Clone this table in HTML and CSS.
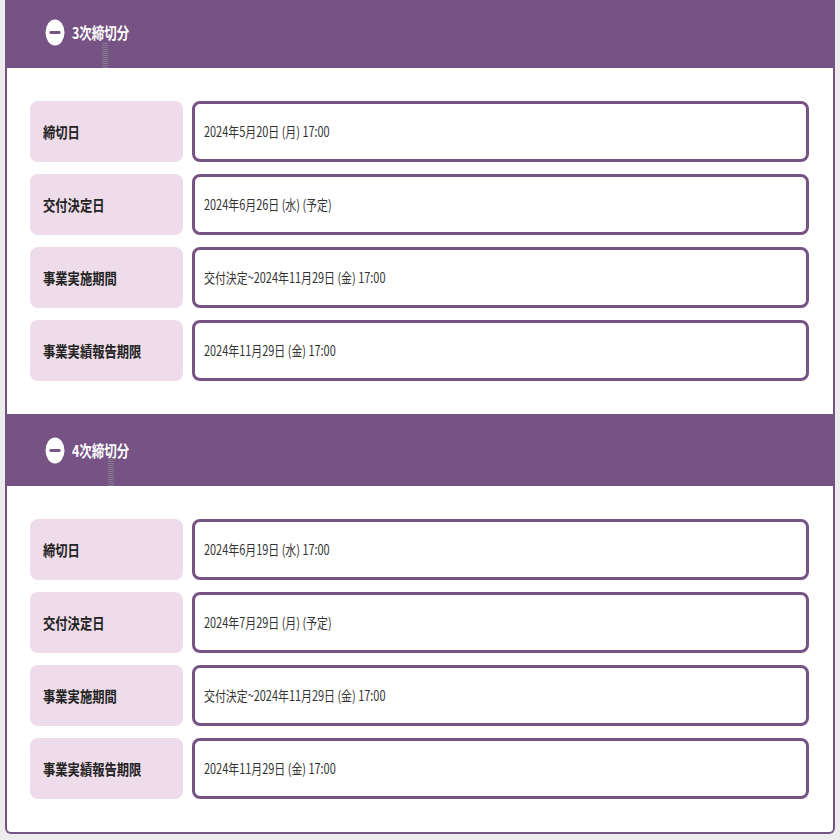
FILE: index.html
```html
<!DOCTYPE html>
<html lang="ja">
<head>
<meta charset="utf-8">
<title>締切分</title>
<link rel="stylesheet" href="styles.css">
</head>
<body>
<div class="wrap">
  <section class="sec">
    <div class="hdr">
      <svg class="ico" width="20" height="27" viewBox="0 0 20 27"><ellipse cx="10" cy="13.5" rx="9.5" ry="13" fill="#fff"/><rect x="4.5" y="12" width="11" height="3" rx="1" fill="#775385"/></svg>
      <span class="ttl">3次締切分</span>
      <span class="ghost g1"></span>
    </div>
    <div class="body">
      <div class="row"><div class="lbl"><span>締切日</span></div><div class="val"><span>2024年5月20日 (月) 17:00</span></div></div>
      <div class="row"><div class="lbl"><span>交付決定日</span></div><div class="val"><span>2024年6月26日 (水) (予定)</span></div></div>
      <div class="row"><div class="lbl"><span>事業実施期間</span></div><div class="val"><span>交付決定~2024年11月29日 (金) 17:00</span></div></div>
      <div class="row"><div class="lbl"><span>事業実績報告期限</span></div><div class="val"><span>2024年11月29日 (金) 17:00</span></div></div>
    </div>
  </section>
  <section class="sec">
    <div class="hdr">
      <svg class="ico" width="20" height="27" viewBox="0 0 20 27"><ellipse cx="10" cy="13.5" rx="9.5" ry="13" fill="#fff"/><rect x="4.5" y="12" width="11" height="3" rx="1" fill="#775385"/></svg>
      <span class="ttl">4次締切分</span>
      <span class="ghost g2"></span>
    </div>
    <div class="body">
      <div class="row"><div class="lbl"><span>締切日</span></div><div class="val"><span>2024年6月19日 (水) 17:00</span></div></div>
      <div class="row"><div class="lbl"><span>交付決定日</span></div><div class="val"><span>2024年7月29日 (月) (予定)</span></div></div>
      <div class="row"><div class="lbl"><span>事業実施期間</span></div><div class="val"><span>交付決定~2024年11月29日 (金) 17:00</span></div></div>
      <div class="row"><div class="lbl"><span>事業実績報告期限</span></div><div class="val"><span>2024年11月29日 (金) 17:00</span></div></div>
    </div>
  </section>
</div>
</body>
</html>
```
FILE: styles.css
```css
html, body {
  margin: 0;
  padding: 0;
  background: #ededed;
  font-family: "Noto Sans CJK JP", "Noto Sans", sans-serif;
}
.wrap {
  margin: -4px 5px 0 5px;
  border: 2px solid #775385;
  border-top: none;
  border-radius: 0 0 6px 6px;
  background: #fff;
  overflow: hidden;
}
.hdr {
  position: relative;
  height: 72px;
  background: #775385;
  display: flex;
  align-items: center;
  padding-left: 38px;
  gap: 7px;
}
.ico {
  display: block;
  flex: none;
}
.ttl {
  display: inline-block;
  color: #fff;
  font-weight: 700;
  font-size: 16px;
  transform: scaleX(0.78);
  transform-origin: left center;
}
.ghost {
  position: absolute;
  bottom: 0;
  width: 6px;
  background: repeating-linear-gradient(0deg, #8d7a93 0 1px, #6f5a80 1px 2px);
  opacity: 0.85;
}
.g1 { left: 95px; height: 26px; }
.g2 { left: 101px; height: 28px; }
.body {
  padding: 33px 24px 33px 23px;
  display: flex;
  flex-direction: column;
  gap: 12px;
}
.row {
  display: grid;
  grid-template-columns: 153px 1fr;
  gap: 9px;
  height: 61px;
}
.lbl {
  background: #efdcea;
  border-radius: 8px;
  display: flex;
  align-items: center;
  padding-left: 13px;
}
.lbl span {
  display: inline-block;
  font-size: 15px;
  font-weight: 700;
  color: #222;
  transform: scaleX(0.82);
  transform-origin: left center;
  white-space: nowrap;
}
.val {
  border: 3px solid #775385;
  border-radius: 8px;
  display: flex;
  align-items: center;
  padding-left: 9px;
  padding-bottom: 1px;
}
.val span {
  display: inline-block;
  font-size: 14px;
  color: #333;
  transform: scaleX(0.78);
  transform-origin: left center;
  white-space: nowrap;
}
```
